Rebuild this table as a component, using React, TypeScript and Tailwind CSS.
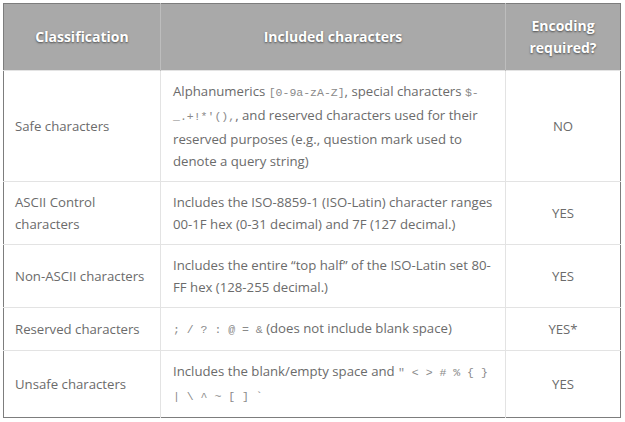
const mono = "font-['Liberation_Mono','DejaVu_Sans_Mono',monospace] text-[11.5px] text-[#8a8a8a]";

function Code({ children }: { children: React.ReactNode }) {
  return <span className={mono}>{children}</span>;
}

type Row = {
  name: React.ReactNode;
  detail: React.ReactNode;
  encode: string;
};

const rows: Row[] = [
  {
    name: "Safe characters",
    detail: (
      <>
        Alphanumerics <Code>[0-9a-zA-Z]</Code>, special characters <Code>$-</Code>
        <br />
        <Code>_.+!*'(),</Code>, and reserved characters used for their reserved purposes (e.g., question mark used to
        denote a query string)
      </>
    ),
    encode: "NO",
  },
  {
    name: (
      <>
        ASCII Control
        <br />
        characters
      </>
    ),
    detail: "Includes the ISO-8859-1 (ISO-Latin) character ranges 00-1F hex (0-31 decimal) and 7F (127 decimal.)",
    encode: "YES",
  },
  {
    name: "Non-ASCII characters",
    detail: "Includes the entire \u201ctop half\u201d of the ISO-Latin set 80-FF hex (128-255 decimal.)",
    encode: "YES",
  },
  {
    name: "Reserved characters",
    detail: (
      <>
        <Code>; / ? : @ = &amp;</Code> (does not include blank space)
      </>
    ),
    encode: "YES*",
  },
  {
    name: "Unsafe characters",
    detail: (
      <>
        Includes the blank/empty space and <Code>" &lt; &gt; # % {"{"} {"}"}</Code>
        <br />
        <Code>| \ ^ ~ [ ] `</Code>
      </>
    ),
    encode: "YES",
  },
];

const th = "px-3 py-[11px] font-bold text-white text-[14px] leading-[22px] text-center [text-shadow:0_1px_2px_rgba(0,0,0,0.55)] border-l border-[#bdbdbd] first:border-l-0";

export default function App() {
  return (
    <div className="w-[625px] h-[422px] bg-white pt-[3px] pl-[3px] font-['Open_Sans','Noto_Sans',sans-serif]">
      <table className="w-[617px] border-collapse border border-[#7d7d7d] text-[13.2px] leading-[22px] text-[#6b6b6b] table-fixed">
        <colgroup>
          <col className="w-[157px]" />
          <col className="w-[345px]" />
          <col className="w-[115px]" />
        </colgroup>
        <thead>
          <tr className="bg-[#a9a9a9] h-[67px]">
            <th className={th}>Classification</th>
            <th className={th}>Included characters</th>
            <th className={th}>
              Encoding
              <br />
              required?
            </th>
          </tr>
        </thead>
        <tbody>
          {rows.map((r, i) => (
            <tr key={i} className="border-t border-[#e3e3e3]">
              <td className="pl-[11px] pr-2 py-[9px] align-middle">{r.name}</td>
              <td className="px-3 py-[9px] align-middle border-l border-[#e3e3e3]">{r.detail}</td>
              <td className="px-2 py-[9px] align-middle text-center border-l border-[#e3e3e3]">{r.encode}</td>
            </tr>
          ))}
        </tbody>
      </table>
    </div>
  );
}
